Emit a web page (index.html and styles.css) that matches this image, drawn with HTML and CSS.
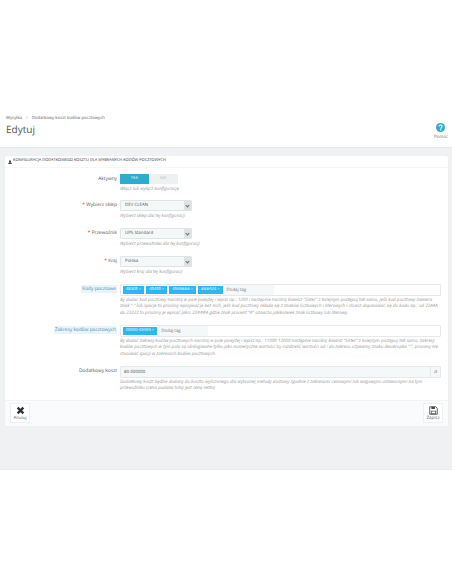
FILE: index.html
```html
<!DOCTYPE html>
<html lang="pl">
<head>
<meta charset="utf-8">
<title>Edytuj</title>
<link rel="stylesheet" href="styles.css">
</head>
<body>
<header class="page-head">
  <div class="head-text">
    <div class="crumbs"><span>Wysyłka</span><span class="sep">/</span><span>Dodatkowy koszt kodów pocztowych</span></div>
    <h1>Edytuj</h1>
  </div>
  <div class="help-btn">
    <svg class="help-icon" viewBox="0 0 20 20"><circle cx="10" cy="10" r="10" fill="#2eacce"/><path d="M6.8 7.6a3.3 3.3 0 1 1 5 2.8c-1 .6-1.5 1-1.5 2.1" fill="none" stroke="#fff" stroke-width="2.4"/><rect x="9" y="14" width="2.6" height="2.6" fill="#fff"/></svg>
    <span>Pomoc</span>
  </div>
</header>
<main class="content">
  <section class="panel">
    <div class="panel-heading">
      <svg class="user-icon" viewBox="0 0 10 10"><circle cx="5" cy="3" r="2.6" fill="#444"/><path d="M0.5 10c0-3.4 1.8-4.6 4.5-4.6s4.5 1.2 4.5 4.6z" fill="#444"/></svg>
      <span>KONFIGURACJA DODATKOWEGO KOSZTU DLA WYBRANYCH KODÓW POCZTOWYCH</span>
    </div>
    <div class="form-body">
      <div class="row row-active">
        <label class="lbl">Aktywny</label>
        <div class="field">
          <div class="switch"><span class="on">TAK</span><span class="off">NIE</span></div>
          <p class="hint">Włącz lub wyłącz konfigurację</p>
        </div>
      </div>
      <div class="row row-select">
        <label class="lbl"><b class="req">*</b> Wybierz sklep</label>
        <div class="field">
          <div class="select"><span>DEV CLEAN</span><i class="caret"></i></div>
          <p class="hint">Wybierz sklep dla tej konfiguracji</p>
        </div>
      </div>
      <div class="row row-select">
        <label class="lbl"><b class="req">*</b> Przewoźnik</label>
        <div class="field">
          <div class="select"><span>UPS Standard</span><i class="caret"></i></div>
          <p class="hint">Wybierz przewoźnika dla tej konfiguracji</p>
        </div>
      </div>
      <div class="row row-select">
        <label class="lbl"><b class="req">*</b> Kraj</label>
        <div class="field">
          <div class="select"><span>Polska</span><i class="caret"></i></div>
          <p class="hint">Wybierz kraj dla tej konfiguracji</p>
        </div>
      </div>
      <div class="row row-tags">
        <label class="lbl"><span class="lbl-mark">Kody pocztowe</span></label>
        <div class="field">
          <div class="tagbox">
            <span class="tag">48305 <i>×</i></span>
            <span class="tag">45455 <i>×</i></span>
            <span class="tag">4569### <i>×</i></span>
            <span class="tag">###A24 <i>×</i></span>
            <span class="tag-input">Dodaj tag</span>
          </div>
          <p class="hint">By dodać kod pocztowy naciśnij w pole powyżej i wpisz np.: 1200 i następnie naciśnij klawisz "Enter" z kolejnym postępuj tak samo, jeśli kod pocztowy zawiera znak "-" lub spacje to prosimy wpisywać je bez nich, jeśli kod pocztowy składa się z znaków liczbowych i literowych i chcesz dopasować się do kodu np.: od 22AAA do 23222 to prosimy je wpisać jako: 22###A gdzie znak procent "#" oznacza jakikolwiek znak liczbowy lub literowy.</p>
        </div>
      </div>
      <div class="row row-tags">
        <label class="lbl"><span class="lbl-mark">Zakresy kodów pocztowych</span></label>
        <div class="field">
          <div class="tagbox">
            <span class="tag">00000-09999 <i>×</i></span>
            <span class="tag-input">Dodaj tag</span>
          </div>
          <p class="hint">By dodać zakresy kodów pocztowych naciśnij w pole powyżej i wpisz np.: 11000-12000 następnie naciśnij klawisz "Enter" z kolejnym postępuj tak samo, zakresy kodów pocztowych w tym polu są obsługiwane tylko jako numeryczne wartości by rozdzielić wartości od / do zakresu używamy znaku dwukropka ":", prosimy nie stosować spacji w zakresach kodów pocztowych.</p>
        </div>
      </div>
      <div class="row row-cost">
        <label class="lbl">Dodatkowy koszt</label>
        <div class="field">
          <div class="input-group"><span class="val">80.000000</span><span class="addon">zł</span></div>
          <p class="hint">Dodatkowy koszt będzie dodany do kosztu wyliczonego dla wybranej metody dostawy zgodnie z zakresami cenowymi lub wagowymi ustawionymi na tym przewoźniku (cena podana tutaj jest ceną netto)</p>
        </div>
      </div>
    </div>
    <footer class="panel-footer">
      <div class="act">
        <svg class="act-icon" viewBox="0 0 12 12"><path d="M1 3.2 3.2 1 6 3.8 8.8 1 11 3.2 8.2 6 11 8.8 8.8 11 6 8.2 3.2 11 1 8.8 3.8 6z" fill="#333"/></svg>
        <span>Anuluj</span>
      </div>
      <div class="act">
        <svg class="act-icon" viewBox="0 0 12 12"><path d="M1 1h8l2 2v8H1z" fill="none" stroke="#444" stroke-width="1.1"/><rect x="3.2" y="1" width="4.6" height="3" fill="#444"/><rect x="3" y="6.8" width="6" height="3.6" fill="none" stroke="#444" stroke-width=".9"/></svg>
        <span>Zapisz</span>
      </div>
    </footer>
  </section>
</main>
</body>
</html>
```

FILE: styles.css
```css
* { box-sizing: border-box; }
html, body { margin: 0; }
body {
  background: #fff;
  font-family: "Open Sans", "Liberation Sans", sans-serif;
  color: #555;
  font-size: 4.7px;
  line-height: 6.4px;
  text-rendering: geometricPrecision;
}
.page-head {
  height: 148px;
  background: #fff;
  border-bottom: 1px solid #e8eaec;
  display: flex;
  justify-content: space-between;
  align-items: flex-end;
  padding: 0 4px 6px 6px;
}
.crumbs { display: flex; gap: 4px; color: #666; font-size: 4.3px; line-height: 6px; margin-bottom: 2px; }
.sep { color: #999; }
h1 { margin: 0 0 5.5px; font-weight: 400; font-size: 10px; line-height: 13px; color: #555; }
.help-btn { display: flex; flex-direction: column; align-items: center; gap: 3px; margin-bottom: 1px; color: #777; font-size: 4.4px; line-height: 5px; }
.help-icon { width: 9px; height: 9px; display: block; }
.content { height: 322px; background: #eff1f2; padding: 8px 4px 0 5px; border-bottom: 1px solid #e9ebec; }
.panel { background: #fff; border-radius: 2px; box-shadow: 0 0 1px #dfe3e5; }
.panel-heading {
  height: 12px;
  display: flex;
  align-items: center;
  gap: 1px;
  padding-left: 3px;
  border-bottom: 1px solid #f5f6f7;
  color: #333;
  font-size: 3.95px;
  white-space: nowrap;
}
.user-icon { width: 4px; height: 4px; }
.form-body { padding-top: 6px; }
.row { display: grid; grid-template-columns: 112px 321px; column-gap: 3px; }
.row-active { height: 25.5px; }
.row-select { height: 28px; }
.row-tags { height: 41px; }
.row-cost { height: 34px; }
.lbl { text-align: right; color: #555; font-size: 4.8px; line-height: 11px; }
.req { color: #e0322d; font-weight: 400; }
.lbl-mark { background: #eaf5fb; color: #4f8aa6; padding: 1px 1px; }
.hint { margin: 2px 0 0; color: #999; font-style: italic; font-size: 4.5px; line-height: 6.4px; }
.row-tags .hint, .row-cost .hint { margin-top: 1px; }
.switch { display: flex; width: 57.5px; height: 9.5px; font-size: 4px; line-height: 9.5px; text-align: center; }
.switch .on { flex: 1; background: #2eacce; color: #fff; }
.switch .off { width: 29px; background: #eef1f2; color: #bbb; }
.select {
  width: 71.5px;
  height: 11.5px;
  background: #f5f8f9;
  border: 1px solid #dfe4e6;
  border-radius: 1px;
  display: flex;
  justify-content: space-between;
  align-items: center;
  padding-left: 4px;
  font-size: 4.4px;
  color: #555;
}
.caret {
  width: 7px;
  height: 100%;
  background: #dfe3e4;
  position: relative;
}
.caret::after {
  content: "";
  position: absolute;
  left: 2px;
  top: 3px;
  width: 2px;
  height: 2px;
  border-right: .7px solid #666;
  border-bottom: .7px solid #666;
  transform: rotate(45deg);
}
.tagbox {
  height: 12.5px;
  border: 1px solid #e6e9eb;
  border-radius: 1px;
  display: flex;
  align-items: center;
  gap: 2px;
  padding-left: 2px;
  background: #fff;
}
.tag {
  background: #29b8f2;
  color: #fff;
  height: 8.5px;
  line-height: 8.5px;
  padding: 0 3px;
  font-size: 4.1px;
  white-space: nowrap;
}
.tag i { font-style: normal; opacity: .7; }
.tag-input {
  width: 51px;
  height: 10.5px;
  line-height: 10.5px;
  margin-left: -2px;
  padding-left: 4px;
  background: #f5f8f9;
  color: #777;
  font-size: 4.4px;
}
.input-group {
  height: 12px;
  display: flex;
  justify-content: space-between;
  background: #f5f8f9;
  border: 1px solid #e6e9eb;
  border-radius: 1px;
  font-size: 4.4px;
  line-height: 10px;
}
.val { padding-left: 3px; color: #555; }
.addon { width: 10px; text-align: center; border-left: 1px solid #e6e9eb; color: #666; }
.panel-footer {
  height: 26px;
  background: #fafbfd;
  border-top: 1px solid #f1f3f4;
  display: flex;
  justify-content: space-between;
  align-items: center;
  padding: 0 5px 0 5px;
}
.act {
  width: 20px;
  height: 20px;
  background: #fff;
  border: 1px solid #eef0f1;
  display: flex;
  flex-direction: column;
  align-items: center;
  justify-content: center;
  gap: 1px;
  font-size: 4.4px;
  line-height: 5px;
  color: #666;
}
.act-icon { width: 9px; height: 9px; }
```
